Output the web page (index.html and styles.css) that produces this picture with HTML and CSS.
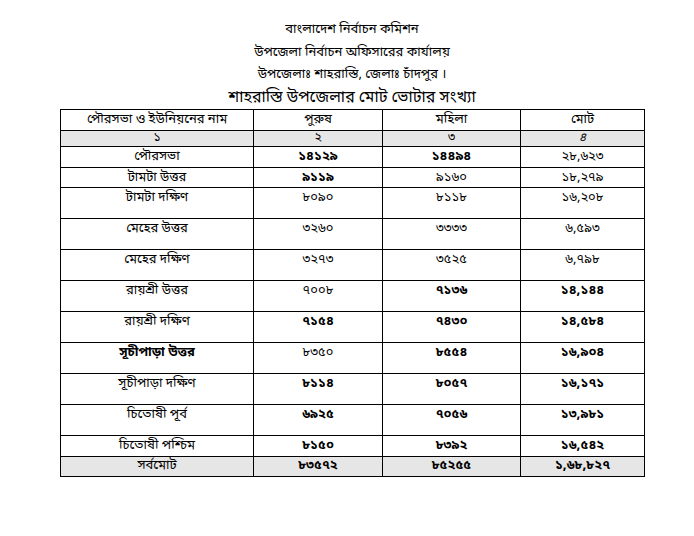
FILE: index.html
```html
<!DOCTYPE html>
<html lang="bn">
<head>
<meta charset="utf-8">
<title>শাহরাস্তি উপজেলার মোট ভোটার সংখ্যা</title>
<link rel="stylesheet" href="styles.css">
</head>
<body>
<div class="page">
  <div class="heading">
    <div class="line">বাংলাদেশ নির্বাচন কমিশন</div>
    <div class="line">উপজেলা নির্বাচন অফিসারের কার্যালয়</div>
    <div class="line">উপজেলাঃ শাহরাস্তি, জেলাঃ চাঁদপুর ।</div>
    <div class="title">শাহরাস্তি উপজেলার মোট ভোটার সংখ্যা</div>
  </div>
  <table class="voters">
    <colgroup>
      <col class="c1"><col class="c2"><col class="c3"><col class="c4">
    </colgroup>
    <thead>
      <tr class="head"><th>পৌরসভা ও ইউনিয়নের নাম</th><th>পুরুষ</th><th>মহিলা</th><th>মোট</th></tr>
      <tr class="nums"><td>১</td><td>২</td><td>৩</td><td class="it">৪</td></tr>
    </thead>
    <tbody>
      <tr class="short"><td>পৌরসভা</td><td class="b">১৪১২৯</td><td class="b">১৪৪৯৪</td><td>২৮,৬২৩</td></tr>
      <tr class="short2"><td>টামটা উত্তর</td><td class="b">৯১১৯</td><td>৯১৬০</td><td>১৮,২৭৯</td></tr>
      <tr class="tall"><td>টামটা দক্ষিণ</td><td>৮০৯০</td><td>৮১১৮</td><td>১৬,২০৮</td></tr>
      <tr class="tall"><td>মেহের উত্তর</td><td>৩২৬০</td><td>৩৩৩৩</td><td>৬,৫৯৩</td></tr>
      <tr class="tall"><td>মেহের দক্ষিণ</td><td>৩২৭৩</td><td>৩৫২৫</td><td>৬,৭৯৮</td></tr>
      <tr class="tall"><td>রায়শ্রী উত্তর</td><td>৭০০৮</td><td class="b">৭১৩৬</td><td class="b">১৪,১৪৪</td></tr>
      <tr class="tall"><td>রায়শ্রী দক্ষিণ</td><td class="b">৭১৫৪</td><td class="b">৭৪৩০</td><td class="b">১৪,৫৮৪</td></tr>
      <tr class="tall"><td class="b">সূচীপাড়া উত্তর</td><td>৮৩৫০</td><td class="b">৮৫৫৪</td><td class="b">১৬,৯০৪</td></tr>
      <tr class="tall"><td>সূচীপাড়া দক্ষিণ</td><td class="b">৮১১৪</td><td class="b">৮০৫৭</td><td class="b">১৬,১৭১</td></tr>
      <tr class="tall"><td>চিতোষী পূর্ব</td><td class="b">৬৯২৫</td><td class="b">৭০৫৬</td><td class="b">১৩,৯৮১</td></tr>
      <tr class="short"><td>চিতোষী পশ্চিম</td><td class="b">৮১৫০</td><td class="b">৮৩৯২</td><td class="b">১৬,৫৪২</td></tr>
      <tr class="total"><td>সর্বমোট</td><td class="b">৮৩৫৭২</td><td class="b">৮৫২৫৫</td><td class="b">১,৬৮,৮২৭</td></tr>
    </tbody>
  </table>
</div>
</body>
</html>
```
FILE: styles.css
```css
html, body {
  margin: 0;
  padding: 0;
  background: #ffffff;
}
body {
  font-family: "Noto Sans Bengali", "Noto Serif Bengali", "Lohit Bengali", "Noto Sans", sans-serif;
  color: #000;
}
.page {
  padding: 19px 0 0 60px;
  width: 584px;
}
.heading {
  text-align: center;
  font-size: 13px;
}
.line {
  height: 22.5px;
  line-height: 22.5px;
}
.title {
  font-size: 16px;
  height: 22px;
  line-height: 22px;
}
.voters {
  border-collapse: collapse;
  width: 584px;
  table-layout: fixed;
  font-size: 13px;
}
.c1 { width: 193px; }
.c2 { width: 129px; }
.c3 { width: 138px; }
.c4 { width: 124px; }
.voters th, .voters td {
  border: 1px solid #000;
  text-align: center;
  padding: 0;
  font-weight: normal;
  vertical-align: top;
  line-height: 18px;
}
.head th { height: 20px; line-height: 20px; }
.nums td { background: #e6e6e6; height: 15px; line-height: 15px; font-size: 12px; }
.short td { height: 19px; padding-top: 1px; }
.short2 td { height: 18px; padding-top: 1px; }
.tall td { height: 29px; padding-top: 1px; }
.total td { background: #e6e6e6; height: 19px; }
.b { font-weight: bold !important; }
.it { font-style: italic; }
```
